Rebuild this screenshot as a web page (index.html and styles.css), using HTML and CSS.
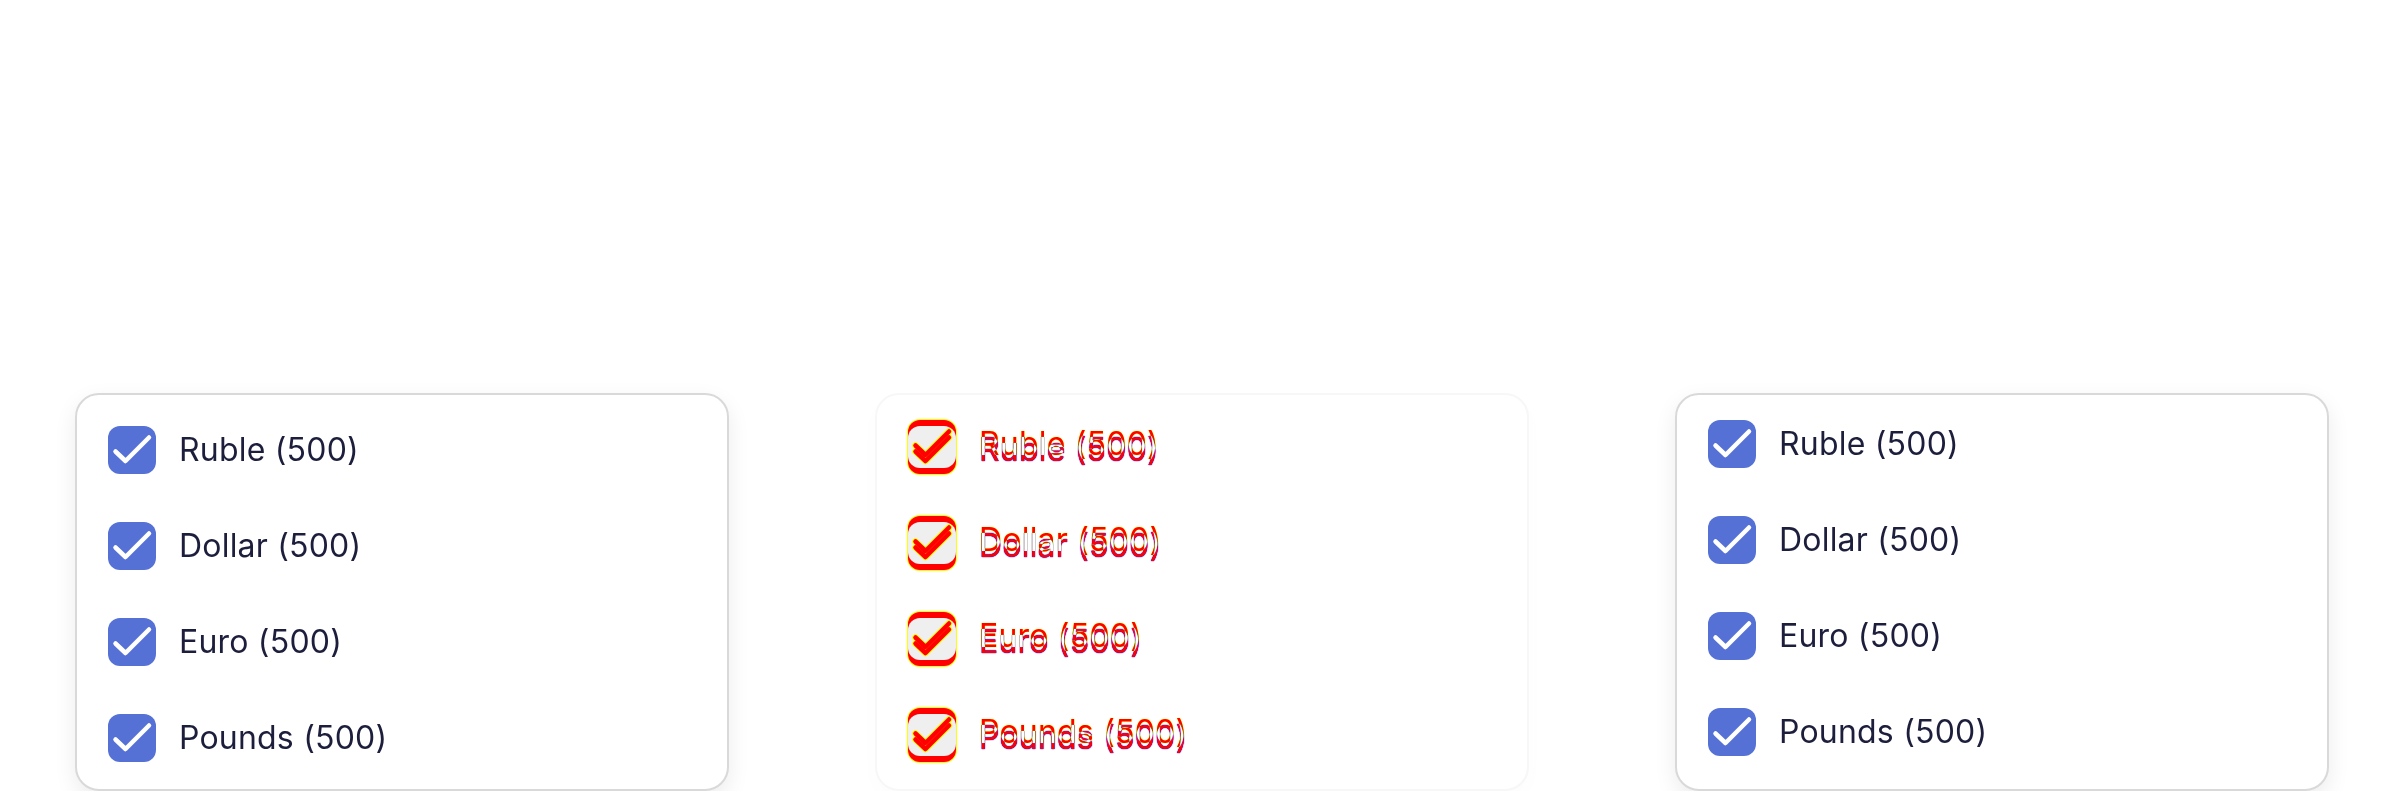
FILE: index.html
```html
<!DOCTYPE html>
<html lang="en">
<head>
<meta charset="utf-8">
<title>Currency filters</title>
<link rel="stylesheet" href="styles.css">
</head>
<body>
<main class="stage">
  <section class="card card-a">
    <div class="row"><svg class="box" viewBox="0 0 48 48"><rect width="48" height="48" rx="12" class="box-bg"/><path d="M7.5 25.5L17.5 35L41 11.5" class="tick"/></svg><span class="lbl">Ruble (500)</span></div>
    <div class="row"><svg class="box" viewBox="0 0 48 48"><rect width="48" height="48" rx="12" class="box-bg"/><path d="M7.5 25.5L17.5 35L41 11.5" class="tick"/></svg><span class="lbl">Dollar (500)</span></div>
    <div class="row"><svg class="box" viewBox="0 0 48 48"><rect width="48" height="48" rx="12" class="box-bg"/><path d="M7.5 25.5L17.5 35L41 11.5" class="tick"/></svg><span class="lbl">Euro (500)</span></div>
    <div class="row"><svg class="box" viewBox="0 0 48 48"><rect width="48" height="48" rx="12" class="box-bg"/><path d="M7.5 25.5L17.5 35L41 11.5" class="tick"/></svg><span class="lbl">Pounds (500)</span></div>
  </section>

  <section class="card card-diff">
    <div class="row"><svg class="box box-diff" viewBox="0 0 48 48"><rect x="-1" y="-1" width="50" height="50" rx="13" class="d-edge"/><rect x="-1" y="5" width="50" height="50" rx="13" class="d-edge"/><rect width="48" height="48" rx="12" class="d-red"/><rect y="6" width="48" height="48" rx="12" class="d-red"/><rect y="6" width="48" height="42" rx="12" class="d-same"/><path d="M7.5 25.5L17.5 35L41 11.5" class="d-tick-edge"/><path d="M7.5 31.5L17.5 41L41 17.5" class="d-tick-edge"/><path d="M7.5 25.5L17.5 35L41 11.5" class="d-tick"/><path d="M7.5 31.5L17.5 41L41 17.5" class="d-tick"/></svg><span class="lbl lbl-diff" data-label="Ruble (500)">Ruble (500)</span></div>
    <div class="row"><svg class="box box-diff" viewBox="0 0 48 48"><rect x="-1" y="-1" width="50" height="50" rx="13" class="d-edge"/><rect x="-1" y="5" width="50" height="50" rx="13" class="d-edge"/><rect width="48" height="48" rx="12" class="d-red"/><rect y="6" width="48" height="48" rx="12" class="d-red"/><rect y="6" width="48" height="42" rx="12" class="d-same"/><path d="M7.5 25.5L17.5 35L41 11.5" class="d-tick-edge"/><path d="M7.5 31.5L17.5 41L41 17.5" class="d-tick-edge"/><path d="M7.5 25.5L17.5 35L41 11.5" class="d-tick"/><path d="M7.5 31.5L17.5 41L41 17.5" class="d-tick"/></svg><span class="lbl lbl-diff" data-label="Dollar (500)">Dollar (500)</span></div>
    <div class="row"><svg class="box box-diff" viewBox="0 0 48 48"><rect x="-1" y="-1" width="50" height="50" rx="13" class="d-edge"/><rect x="-1" y="5" width="50" height="50" rx="13" class="d-edge"/><rect width="48" height="48" rx="12" class="d-red"/><rect y="6" width="48" height="48" rx="12" class="d-red"/><rect y="6" width="48" height="42" rx="12" class="d-same"/><path d="M7.5 25.5L17.5 35L41 11.5" class="d-tick-edge"/><path d="M7.5 31.5L17.5 41L41 17.5" class="d-tick-edge"/><path d="M7.5 25.5L17.5 35L41 11.5" class="d-tick"/><path d="M7.5 31.5L17.5 41L41 17.5" class="d-tick"/></svg><span class="lbl lbl-diff" data-label="Euro (500)">Euro (500)</span></div>
    <div class="row"><svg class="box box-diff" viewBox="0 0 48 48"><rect x="-1" y="-1" width="50" height="50" rx="13" class="d-edge"/><rect x="-1" y="5" width="50" height="50" rx="13" class="d-edge"/><rect width="48" height="48" rx="12" class="d-red"/><rect y="6" width="48" height="48" rx="12" class="d-red"/><rect y="6" width="48" height="42" rx="12" class="d-same"/><path d="M7.5 25.5L17.5 35L41 11.5" class="d-tick-edge"/><path d="M7.5 31.5L17.5 41L41 17.5" class="d-tick-edge"/><path d="M7.5 25.5L17.5 35L41 11.5" class="d-tick"/><path d="M7.5 31.5L17.5 41L41 17.5" class="d-tick"/></svg><span class="lbl lbl-diff" data-label="Pounds (500)">Pounds (500)</span></div>
  </section>

  <section class="card card-b">
    <div class="row"><svg class="box" viewBox="0 0 48 48"><rect width="48" height="48" rx="12" class="box-bg"/><path d="M7.5 25.5L17.5 35L41 11.5" class="tick"/></svg><span class="lbl">Ruble (500)</span></div>
    <div class="row"><svg class="box" viewBox="0 0 48 48"><rect width="48" height="48" rx="12" class="box-bg"/><path d="M7.5 25.5L17.5 35L41 11.5" class="tick"/></svg><span class="lbl">Dollar (500)</span></div>
    <div class="row"><svg class="box" viewBox="0 0 48 48"><rect width="48" height="48" rx="12" class="box-bg"/><path d="M7.5 25.5L17.5 35L41 11.5" class="tick"/></svg><span class="lbl">Euro (500)</span></div>
    <div class="row"><svg class="box" viewBox="0 0 48 48"><rect width="48" height="48" rx="12" class="box-bg"/><path d="M7.5 25.5L17.5 35L41 11.5" class="tick"/></svg><span class="lbl">Pounds (500)</span></div>
  </section>
</main>
</body>
</html>
```

FILE: styles.css
```css
html, body {
  margin: 0;
  padding: 0;
  background: #ffffff;
  overflow: hidden;
}

.stage {
  display: flex;
  gap: 146px;
  padding: 393px 0 0 75px;
  font-family: Inter, "Noto Sans", sans-serif;
}

.card {
  box-sizing: border-box;
  width: 654px;
  display: flex;
  flex-direction: column;
  gap: 48px;
  padding: 31px 31px 27px;
  background: #ffffff;
  border: 2px solid #d9d9d9;
  border-radius: 24px;
  box-shadow: 0 8px 22px rgba(0, 0, 0, 0.08);
}

.card-b {
  padding-top: 25px;
  padding-bottom: 33px;
}

.card-diff {
  padding-top: 25px;
  padding-bottom: 33px;
  border-color: #f7f7f7;
  box-shadow: 0 8px 22px rgba(0, 0, 0, 0.015);
}

.row {
  display: flex;
  align-items: center;
  gap: 23px;
  height: 48px;
}

.box {
  width: 48px;
  height: 48px;
  flex: none;
  overflow: visible;
}

.box-bg {
  fill: #5571d6;
}

.tick {
  fill: none;
  stroke: #ffffff;
  stroke-width: 4.5;
  stroke-linecap: round;
  stroke-linejoin: round;
}

.lbl {
  font-size: 32px;
  line-height: 40px;
  letter-spacing: 0.2px;
  color: #1c1e3c;
  white-space: nowrap;
}

/* diff-styled middle card */
.d-edge { fill: #ffff00; }
.d-red { fill: #ff0000; }
.d-same { fill: #efefef; }

.d-tick-edge {
  fill: none;
  stroke: #ffff00;
  stroke-width: 6.5;
  stroke-linecap: round;
  stroke-linejoin: round;
}

.d-tick {
  fill: none;
  stroke: #ff0000;
  stroke-width: 4.5;
  stroke-linecap: round;
  stroke-linejoin: round;
}

.lbl-diff {
  position: relative;
  color: #ff0000;
  text-shadow: 0 0 1px #ffff00, 0 0 1px #ffff00;
}

.lbl-diff::after {
  content: attr(data-label);
  position: absolute;
  left: 0;
  top: 6px;
  color: #00ffff;
  mix-blend-mode: difference;
}
```
